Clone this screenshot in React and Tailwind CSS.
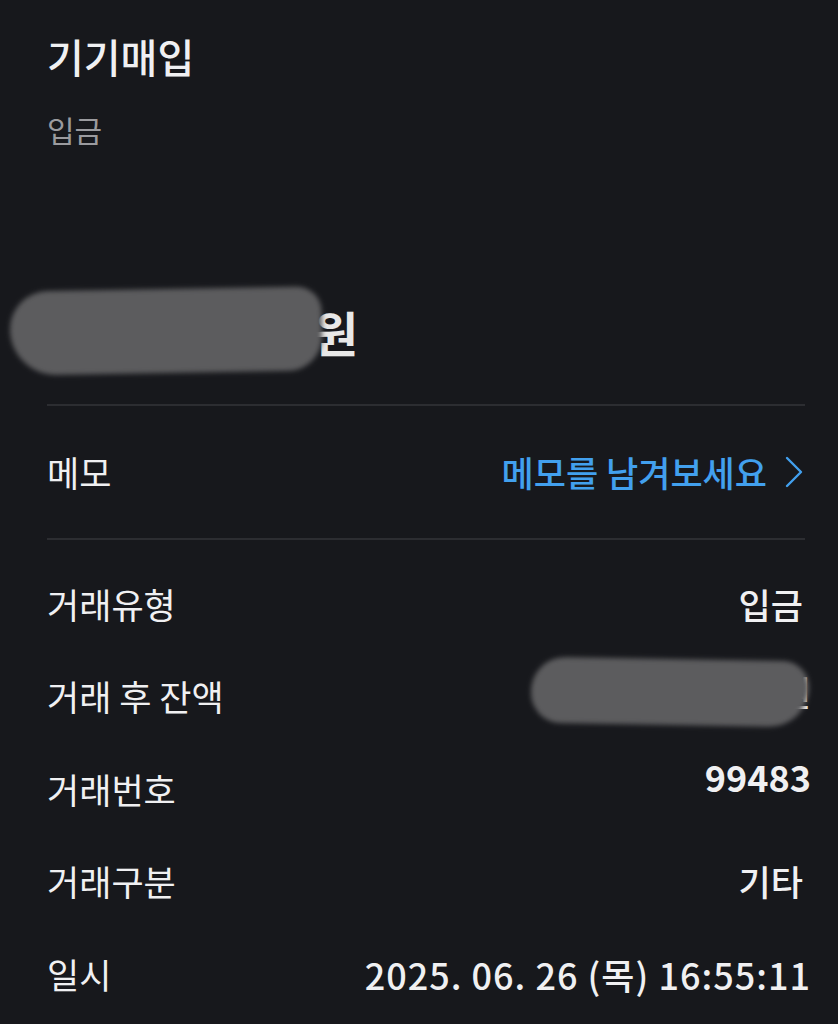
export default function App() {
  const font = { fontFamily: '"Noto Sans CJK KR", "Noto Sans", sans-serif' };
  return (
    <div
      className="min-h-[1024px] w-full bg-[#17181c] pl-[47px] pr-[33px] pt-[31px] text-[#f0f0f2] overflow-hidden"
      style={font}
    >
      <div className="text-[40px] leading-[50px] font-medium">기기매입</div>
      <div className="mt-[28px] text-[30px] leading-[40px] text-[#9b9b9f]">입금</div>

      <div className="mt-[152px] flex h-[60px] items-center">
        <div className="relative z-10 -ml-[37px] h-[84px] w-[312px] shrink-0 -rotate-1 rounded-[40px_26px_36px_48px] bg-[#5c5c5e] blur-[2.5px]" />
        <span className="-ml-[8px] text-[48px] leading-[60px] font-bold text-[#e8e8e8]">원</span>
      </div>

      <div className="mt-[43px] h-[2px] bg-[#2c2d31]" />

      <div className="flex h-[132px] items-center justify-between">
        <span className="text-[35px] leading-[40px]">메모</span>
        <div className="flex items-center gap-[18px] pr-[2px]">
          <span className="text-[35px] leading-[40px] font-medium text-[#42a0ee]">메모를 남겨보세요</span>
          <svg width="18" height="32" viewBox="0 0 18 32" fill="none">
            <polyline points="2,2 16,16 2,30" stroke="#42a0ee" strokeWidth="2.4" strokeLinecap="round" strokeLinejoin="round" />
          </svg>
        </div>
      </div>

      <div className="h-[2px] bg-[#2c2d31]" />

      <div className="pt-[17px]">
        <div className="flex h-[93px] items-center justify-between">
          <span className="text-[35px] leading-[40px]">거래유형</span>
          <span className="pr-[2px] text-[35px] leading-[40px] font-medium">입금</span>
        </div>
        <div className="flex h-[92px] items-center justify-between">
          <span className="text-[35px] leading-[40px]">거래 후 잔액</span>
          <div className="-mt-[8px] flex items-center -mr-[6px]">
            <div className="relative z-10 -mr-[30px] h-[66px] w-[278px] shrink-0 rotate-1 rounded-[36px_28px_42px_32px] bg-[#5c5c5e] blur-[2.5px]" />
            <span className="text-[35px] leading-[40px] font-medium">원</span>
          </div>
        </div>
        <div className="flex h-[93px] items-center justify-between">
          <span className="text-[35px] leading-[40px]">거래번호</span>
          <span className="-mr-[6px] -mt-[26px] text-[36px] leading-[40px] font-semibold">99483</span>
        </div>
        <div className="flex h-[92px] items-center justify-between">
          <span className="text-[35px] leading-[40px]">거래구분</span>
          <span className="pr-[2px] text-[35px] leading-[40px] font-medium">기타</span>
        </div>
        <div className="flex h-[93px] items-center justify-between">
          <span className="text-[35px] leading-[40px]">일시</span>
          <span className="-mr-[6px] text-[36px] leading-[40px] font-medium tracking-[1px]">2025. 06. 26 (목) 16:55:11</span>
        </div>
      </div>
    </div>
  );
}
